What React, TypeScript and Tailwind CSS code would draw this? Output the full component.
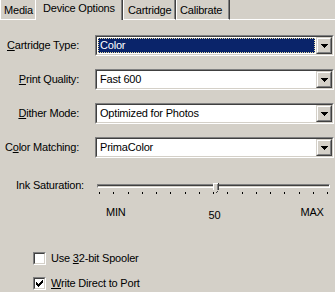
const DropButton = () => (
  <div className="w-[16px] h-full border border-t-[#d4d0c8] border-l-[#d4d0c8] border-r-[#404040] border-b-[#404040]">
    <div className="w-full h-full bg-[#d4d0c8] border border-t-white border-l-white border-r-[#808080] border-b-[#808080] flex items-center justify-center">
      <svg width="7" height="4" viewBox="0 0 7 4" shapeRendering="crispEdges">
        <path d="M0 0h7v1h-1v1h-1v1h-1v1h-1v-1h-1v-1h-1v-1h-1z" fill="#000" />
      </svg>
    </div>
  </div>
);

const Combo = ({ value, selected }: { value: string; selected?: boolean }) => (
  <div className="w-[239px] h-[21px] border border-t-[#808080] border-l-[#808080] border-r-white border-b-white">
    <div className="h-full flex bg-white border border-t-[#404040] border-l-[#404040] border-r-[#d4d0c8] border-b-[#d4d0c8]">
      <div className="flex-1 flex p-[1px]">
        {selected ? (
          <div className="flex-1 flex items-center bg-[#0a246a] text-white border border-dotted border-[#e6d9a0] pl-[1px]">
            {value}
          </div>
        ) : (
          <div className="flex-1 flex items-center pl-[2px] text-black">{value}</div>
        )}
      </div>
      <DropButton />
    </div>
  </div>
);

const Row = ({ label, value, selected }: { label: React.ReactNode; value: string; selected?: boolean }) => (
  <div className="flex items-center">
    <div className="w-[79px] text-right text-black">{label}</div>
    <div className="ml-[16px]">
      <Combo value={value} selected={selected} />
    </div>
  </div>
);

const CheckBox = ({ checked, label }: { checked?: boolean; label: React.ReactNode }) => (
  <div className="flex items-center pl-[33px]">
    <div className="w-[13px] h-[13px] border border-t-[#808080] border-l-[#808080] border-r-white border-b-white">
      <div className="w-full h-full bg-white border border-t-[#404040] border-l-[#404040] border-r-[#d4d0c8] border-b-[#d4d0c8] flex items-center justify-center">
        {checked && (
          <svg width="7" height="7" viewBox="0 0 7 7" shapeRendering="crispEdges">
            <path d="M0 2h1v1h1v1h1v-1h1v-1h1v-1h1v-1h1v3h-1v1h-1v1h-1v1h-1v1h-1v-1h-1v-1h-1v-1h-1z" fill="#000" />
          </svg>
        )}
      </div>
    </div>
    <span className="ml-[5px] text-black">{label}</span>
  </div>
);

const ticks = Array.from({ length: 17 });

export default function App() {
  return (
    <div className="w-[335px] h-[292px] overflow-hidden bg-[#d4d0c8] font-['Liberation_Sans',Arial,sans-serif] text-[11px] leading-[13px] tracking-[-0.2px]">
      {/* Tabs */}
      <div className="flex h-[20px]">
        <div className="w-[35px] border-l border-l-white border-b border-b-white pl-[3px] pt-[4px]">Media</div>
        <div className="w-[88px] flex border-l border-l-white border-r border-r-[#404040]">
          <div className="flex-1 border-r border-r-[#808080] pl-[7px] pt-[2px]">Device Options</div>
        </div>
        <div className="w-[53px] flex border-l border-l-white border-b border-b-white border-r border-r-[#404040]">
          <div className="flex-1 border-r border-r-[#808080] pl-[4px] pt-[4px]">Cartridge</div>
        </div>
        <div className="w-[54px] flex border-l border-l-white border-b border-b-white border-r border-r-[#404040]">
          <div className="flex-1 border-r border-r-[#808080] pl-[3px] pt-[4px]">Calibrate</div>
        </div>
        <div className="flex-1 border-b border-b-white" />
      </div>

      {/* Combos */}
      <div className="flex flex-col gap-[13px] mt-[15px]">
        <Row label={<><u>C</u>artridge Type:</>} value="Color" selected />
        <Row label={<><u>P</u>rint Quality:</>} value="Fast 600" />
        <Row label={<><u>D</u>ither Mode:</>} value="Optimized for Photos" />
        <Row label={<>C<u>o</u>lor Matching:</>} value="PrimaColor" />
      </div>

      {/* Slider */}
      <div className="flex mt-[18px] h-[20px]">
        <div className="w-[97px] pl-[16px] pt-[3px]">Ink Saturation:</div>
        <div className="relative w-[233px] h-full">
          <div className="mt-[8px] h-[4px] border border-t-[#808080] border-l-[#808080] border-r-white border-b-white">
            <div className="h-full border-t border-t-[#404040]" />
          </div>
          <div className="flex justify-between px-[2px] mt-[4px]">
            {ticks.map((_, i) => (
              <div key={i} className="w-[1px] h-[2px] bg-black" />
            ))}
          </div>
          <svg className="absolute left-[116px] top-[7px]" width="6" height="10" viewBox="0 0 6 10" shapeRendering="crispEdges">
            <path d="M0 0h6v7l-3 3l-3-3z" fill="#d4d0c8" />
            <path d="M0 0h5v1h-4v6h-1z" fill="#fff" />
            <path d="M5 0h1v7h-1zM4 8h1v1h-1zM3 9h1v1h-1z" fill="#404040" />
            <path d="M4 1h1v6h-1z" fill="#808080" />
          </svg>
        </div>
      </div>
      <div className="flex text-black mt-[10px] h-[16px]">
        <span className="ml-[106px]">MIN</span>
        <span className="ml-[83px] mt-[3px]">50</span>
        <span className="ml-[80px]">MAX</span>
      </div>

      {/* Checkboxes */}
      <div className="flex flex-col gap-[12px] mt-[30px]">
        <CheckBox label={<>Use <u>3</u>2-bit Spooler</>} />
        <CheckBox checked label={<><u>W</u>rite Direct to Port</>} />
      </div>
    </div>
  );
}
